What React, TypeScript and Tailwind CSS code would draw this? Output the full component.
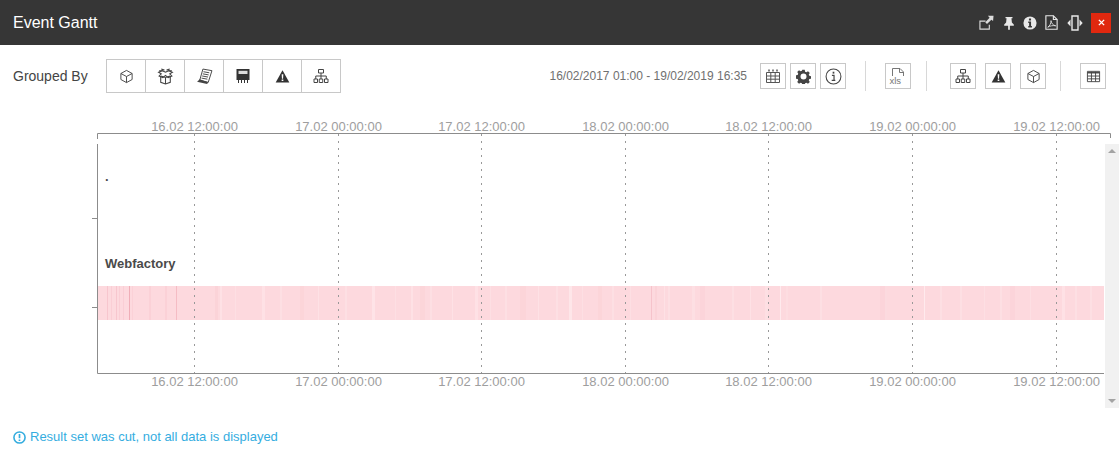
import React from 'react';

const FONT = "font-['Liberation_Sans',Arial,sans-serif]";

const TICKS = [
  { x: 194.5, label: '16.02 12:00:00' },
  { x: 338.5, label: '17.02 00:00:00' },
  { x: 481.5, label: '17.02 12:00:00' },
  { x: 625.5, label: '18.02 00:00:00' },
  { x: 768.5, label: '18.02 12:00:00' },
  { x: 912.5, label: '19.02 00:00:00' },
  { x: 1056.5, label: '19.02 12:00:00' },
];

// darker event stripes in the band
const DARK_STRIPES = [
  [107, 1, 0.25], [111, 1, 0.15], [116, 1, 0.25], [119, 1, 0.15], [123, 1, 0.15], [129, 1, 0.6], [132, 1, 0.1],
  [149, 2, 0.1], [165, 2, 0.1], [176, 1, 0.4], [215, 3, 0.08], [651, 1, 0.3], [655, 2, 0.08], [300, 4, 0.06],
  [420, 5, 0.06], [520, 6, 0.06], [598, 4, 0.06], [700, 5, 0.05], [880, 7, 0.05], [1010, 5, 0.05],
];

// lighter gaps in the band
const LIGHT_STRIPES = [
  [220, 2, 0.4], [235, 1, 0.3], [262, 3, 0.4], [280, 2, 0.3], [318, 1, 0.4], [345, 2, 0.3], [372, 3, 0.5],
  [395, 1, 0.3], [411, 2, 0.4], [430, 2, 0.3], [452, 1, 0.4], [475, 3, 0.4], [490, 1, 0.3], [505, 2, 0.3],
  [538, 1, 0.4], [556, 2, 0.3], [569, 3, 0.6], [582, 1, 0.3], [612, 2, 0.3], [630, 1, 0.3], [664, 1, 0.4],
  [668, 2, 0.3], [692, 3, 0.3], [732, 2, 0.3], [750, 1, 0.4], [765, 3, 0.3], [780, 1, 0.8], [786, 2, 0.2],
  [820, 2, 0.3], [885, 2, 0.3], [924, 1, 0.8], [940, 2, 0.3], [960, 2, 0.3], [984, 1, 0.3], [1000, 2, 0.3],
  [1030, 1, 0.3], [1062, 3, 0.4], [1075, 2, 0.3], [1090, 2, 0.3],
];

const Ico = ({ children, className = 'w-4 h-4' }: { children: React.ReactNode; className?: string }) => (
  <svg viewBox="0 0 16 16" className={className} fill="none" stroke="currentColor" strokeWidth="1">
    {children}
  </svg>
);

const CubeIcon = () => (
  <Ico className="w-[15px] h-[15px] text-[#444]">
    <path d="M8 1.500 14 4.800v6.400L8 14.500l-6-3.300V4.800z" />
    <path d="M2 4.800 8 8l6-3.200M8 8v6.500" />
  </Ico>
);

const BoxOpenIcon = () => (
  <Ico className="w-[17px] h-[17px] text-[#444]">
    <path d="M3.500 7.500v6L8 15l4.500-1.500v-6" />
    <path d="M8 9v6M3.500 7.500 8 9l4.500-1.500" />
    <path d="M1.500 4 5 2.500 8 4 11 2.500 14.500 4 12 5.500l2 2-3.500 1.500L8 7 5.500 9 2 7.500l2-2z" />
    <path d="M2 2.500h3M11 2.500h3M4 1l3 1M12 1 9 2" />
  </Ico>
);

const ReportIcon = () => (
  <svg viewBox="0 0 16 16" className="w-[17px] h-[17px] text-[#444]" fill="none" stroke="currentColor" strokeWidth="0.9">
    <path d="M6.500 1 15 2.500 11.500 13.500 3.500 11.500z" fill="#fff" />
    <path d="M7 3.500l5.500 1M6.400 5.500l5.500 1M5.800 7.500l5.500 1M5.200 9.500l5.500 1" />
    <path d="M1 13 3.500 10.500l8 3-1 1.500-7.500-1.500z" fill="currentColor" stroke="none" />
  </svg>
);

const MeterIcon = () => (
  <svg viewBox="0 0 16 16" className="w-[16px] h-[16px] text-[#333]" fill="currentColor">
    <path d="M1.500 1h13v11h-13z" />
    <rect x="3.500" y="2.800" width="9" height="3.200" fill="#ddd" />
    <path d="M3 12h1v3H3zM6 12h1v3H6zM9 12h1v3H9zM12 12h1v3h-1z" />
  </svg>
);

const WarnIcon = () => (
  <svg viewBox="0 0 16 16" className="w-[15px] h-[15px] text-[#333]">
    <path d="M8 1.200 15.300 14.500H.700z" fill="currentColor" />
    <path d="M7.100 5.500h1.800l-.3 4.800h-1.200zM7.100 11.200h1.800v1.700H7.100z" fill="#fff" />
  </svg>
);

const SitemapIcon = () => (
  <Ico className="w-[16px] h-[16px] text-[#444]">
    <path d="M5.500 1.500h5v3.500h-5zM1 11h3.500v3.500H1zM6.250 11h3.500v3.500h-3.500zM11.500 11H15v3.500h-3.500z" />
    <path d="M8 5v6M2.750 11V8h10.500v3" />
  </Ico>
);

const CalendarIcon = () => (
  <Ico className="w-[16px] h-[16px] text-[#555]">
    <path d="M1.500 4.500h13v10h-13zM1.500 8h13M1.500 11.200h13M5.800 4.500v10M10.200 4.500v10" />
    <path d="M4 1.500v2M8 1.500v2M12 1.500v2" strokeWidth="1.500" />
  </Ico>
);

const GearIcon = () => (
  <svg viewBox="0 0 16 16" className="w-[15px] h-[15px] text-[#444]" fill="currentColor">
    <path
      fillRule="evenodd"
      d="M6.700.8h2.600l.4 2 1.400.6 1.700-1.100 1.900 1.900-1.100 1.700.6 1.400 2 .4v2.600l-2 .4-.6 1.400 1.100 1.700-1.900 1.900-1.700-1.100-1.400.6-.4 2H6.700l-.4-2-1.400-.6-1.700 1.100-1.900-1.900 1.100-1.700-.6-1.400-2-.4V6.700l2-.4.6-1.400-1.100-1.700 1.900-1.900 1.700 1.100 1.400-.6zM8 4.800a3.200 3.200 0 1 0 0 6.400 3.200 3.200 0 0 0 0-6.400z"
    />
  </svg>
);

const InfoOutlineIcon = () => (
  <svg viewBox="0 0 16 16" className="w-[17px] h-[17px] text-[#444]" fill="none" stroke="currentColor">
    <circle cx="8" cy="8" r="7" />
    <path d="M8 3.500v1.800" strokeWidth="1.600" />
    <path d="M6.500 7h2v4.500M6.300 11.700h3.400" strokeWidth="1.100" />
  </svg>
);

const XlsIcon = () => (
  <svg viewBox="0 0 18 18" className="w-[18px] h-[18px] text-[#777]" fill="none" stroke="currentColor" strokeWidth="1">
    <path d="M3.500 9V1.500h7.500l3.500 3.500v4" />
    <path d="M10.500 1.500V5.500h4" />
    <text x="0.500" y="16.500" fill="currentColor" stroke="none" fontSize="9.500" fontFamily="Liberation Sans, Arial, sans-serif">
      xls
    </text>
  </svg>
);

const TableIcon = () => (
  <svg viewBox="0 0 16 16" className="w-[15px] h-[15px] text-[#444]" fill="none" stroke="currentColor">
    <path d="M1.500 2.500h13v11h-13z" />
    <path d="M1.500 4h13" strokeWidth="1.500" />
    <path d="M1.500 7.500h13M1.500 10.500h13M5.800 3v10.500M10.200 3v10.500" />
  </svg>
);

const ExternalIcon = () => (
  <svg viewBox="0 0 16 16" className="w-[15px] h-[15px] text-[#dcdcdc]" fill="none" stroke="currentColor" strokeWidth="1.200">
    <path d="M7 6.500H1v8.500h10v-4.500" />
    <path d="M9.500.8 15.500.8 15 6.500 13.200 5 8.500 9.500 6.700 7.700 11.300 3z" fill="currentColor" stroke="none" />
  </svg>
);

const PinIcon = () => (
  <svg viewBox="0 0 16 16" className="w-[14px] h-[14px] text-[#e8e8e8]" fill="currentColor">
    <path d="M4 1h8v1.500h-1.200l.5 5 2.200 2.200V11H9v4.500L8 16l-1-.5V11H2.500V9.700l2.200-2.200.5-5H4z" />
  </svg>
);

const InfoSolidIcon = () => (
  <svg viewBox="0 0 16 16" className="w-[14px] h-[14px] text-[#e8e8e8]">
    <circle cx="8" cy="8" r="7.500" fill="currentColor" />
    <path d="M6.800 2.800h2.400v2.200H6.800zM6 6.300h3.200v5h1V13H6v-1.700h1V8H6z" fill="#363636" />
  </svg>
);

const PdfIcon = () => (
  <svg viewBox="0 0 16 16" className="w-[15px] h-[15px] text-[#e8e8e8]" fill="none" stroke="currentColor" strokeWidth="1.200">
    <path d="M2 .8h8l4 4v10.400H2z" />
    <path d="M10 .8v4h4" />
    <path d="M4 13c2-1 3.500-4 3.500-7 .5 3 2 5 5 5.500-3-.5-6 0-8.500 1.500z" strokeWidth="0.900" />
  </svg>
);

const FitWidthIcon = () => (
  <svg viewBox="0 0 16 16" className="w-[16px] h-[16px] text-[#e8e8e8]">
    <path d="M5 1h6v14H5z" fill="none" stroke="currentColor" strokeWidth="1.400" />
    <path d="M3.500 4.500v7L.300 8zM12.500 4.500v7L15.700 8z" fill="currentColor" />
  </svg>
);

const IconButton = ({ children }: { children: React.ReactNode }) => (
  <button className="w-[26px] h-[26px] flex items-center justify-center border border-[#c8c8c8] bg-white shrink-0">
    {children}
  </button>
);

const Divider = () => <div className="w-px h-[30px] bg-[#d8d8d8] shrink-0" />;

const App: React.FC = () => {
  const groups = [CubeIcon, BoxOpenIcon, ReportIcon, MeterIcon, WarnIcon, SitemapIcon];

  return (
    <div className={`w-[1119px] h-[465px] bg-white overflow-hidden flex flex-col ${FONT}`}>
      {/* Header */}
      <div className="h-[45px] bg-[#363636] flex items-center justify-between pl-[13px] pr-[8px] shrink-0">
        <h1 className="text-[16px] text-white">Event Gantt</h1>
        <div className="flex items-center">
          <span className="mr-[8px]"><ExternalIcon /></span>
          <span className="mr-[7px]"><PinIcon /></span>
          <span className="mr-[7px]"><InfoSolidIcon /></span>
          <span className="mr-[8px]"><PdfIcon /></span>
          <span className="mr-[8px]"><FitWidthIcon /></span>
          <button className="w-[20px] h-[20px] bg-[#e0280f] text-white flex items-center justify-center">
            <svg viewBox="0 0 8 8" className="w-[7px] h-[7px]" stroke="currentColor" strokeWidth="1.600">
              <path d="M1 1l6 6M7 1 1 7" />
            </svg>
          </button>
        </div>
      </div>

      {/* Toolbar */}
      <div className="h-[70px] flex items-center pl-[13px] pr-[13px] pb-[8px] shrink-0">
        <span className="text-[14px] text-[#444] w-[93px]">Grouped By</span>
        <div className="flex h-[34px] border border-[#c8c8c8] w-[235px]">
          {groups.map((Icon, i) => (
            <div key={i} className="flex-1 flex items-center justify-center border-r border-[#c8c8c8] last:border-r-0">
              <Icon />
            </div>
          ))}
        </div>
        <div className="ml-auto flex items-center">
          <span className="text-[12px] text-[#707070] mr-[13px]">16/02/2017 01:00 - 19/02/2019 16:35</span>
          <div className="flex gap-[4px]">
            <IconButton><CalendarIcon /></IconButton>
            <IconButton><GearIcon /></IconButton>
            <IconButton><InfoOutlineIcon /></IconButton>
          </div>
          <div className="mx-[19px]"><Divider /></div>
          <IconButton><XlsIcon /></IconButton>
          <div className="ml-[15px] mr-[23px]"><Divider /></div>
          <div className="flex gap-[9px]">
            <IconButton><SitemapIcon /></IconButton>
            <IconButton><WarnIcon /></IconButton>
            <IconButton><CubeIcon /></IconButton>
          </div>
          <div className="ml-[14px] mr-[19px]"><Divider /></div>
          <IconButton><TableIcon /></IconButton>
        </div>
      </div>

      {/* Chart */}
      <div className="h-[300px] flex shrink-0">
        <svg viewBox="0 115 1105 300" className="w-[1105px] h-[300px] overflow-visible shrink-0">
          <rect x="97" y="286" width="1007" height="34" fill="#fdd9de" />
          {LIGHT_STRIPES.map(([x, w, o]) => (
            <rect key={`l${x}`} x={x} y="286" width={w} height="34" fill="#ffeef0" opacity={o} />
          ))}
          {DARK_STRIPES.map(([x, w, o]) => (
            <rect key={`d${x}`} x={x} y="286" width={w} height="34" fill="#e8919e" opacity={o} />
          ))}

          {TICKS.map((t) => (
            <g key={t.x}>
              <line x1={t.x} x2={t.x} y1="134" y2="373" stroke="#999" strokeDasharray="2 5" />
              <text x={t.x} y="131" textAnchor="middle" fontSize="13" fill="#9e9e9e">{t.label}</text>
              <text x={t.x} y="386" textAnchor="middle" fontSize="13" fill="#9e9e9e">{t.label}</text>
            </g>
          ))}

          {/* axes */}
          <path d="M97.500 139V133.500H1110.500V138" fill="none" stroke="#8c8c8c" />
          <path d="M97.500 144V373.500H1104" fill="none" stroke="#8c8c8c" />
          <path d="M92 218.500H97M92 307.500H97" stroke="#8c8c8c" />

          <text x="105" y="181" fontSize="13" fontWeight="700" fill="#4a4a4a">.</text>
          <text x="105" y="268" fontSize="13" fontWeight="700" fill="#4a4a4a">Webfactory</text>
        </svg>

        {/* Scrollbar */}
        <div className="w-[14px] h-[264px] mt-[29px] bg-[#f1f1f1] flex flex-col items-center justify-between py-[5px] shrink-0">
          <div className="w-0 h-0 border-x-[4px] border-x-transparent border-b-[4px] border-b-[#a3a3a3]" />
          <div className="w-0 h-0 border-x-[4px] border-x-transparent border-t-[4px] border-t-[#a3a3a3]" />
        </div>
      </div>

      {/* Footer note */}
      <div className="h-[44px] flex items-center gap-[4px] pl-[13px] text-[#35addf] text-[13px] shrink-0">
        <svg viewBox="0 0 14 14" className="w-[13px] h-[13px]" fill="none" stroke="currentColor">
          <circle cx="7" cy="7" r="6" strokeWidth="1.700" />
          <path d="M7 3.200v4.500M7 9.200v1.600" strokeWidth="1.800" />
        </svg>
        <span>Result set was cut, not all data is displayed</span>
      </div>
    </div>
  );
};

export default App;
